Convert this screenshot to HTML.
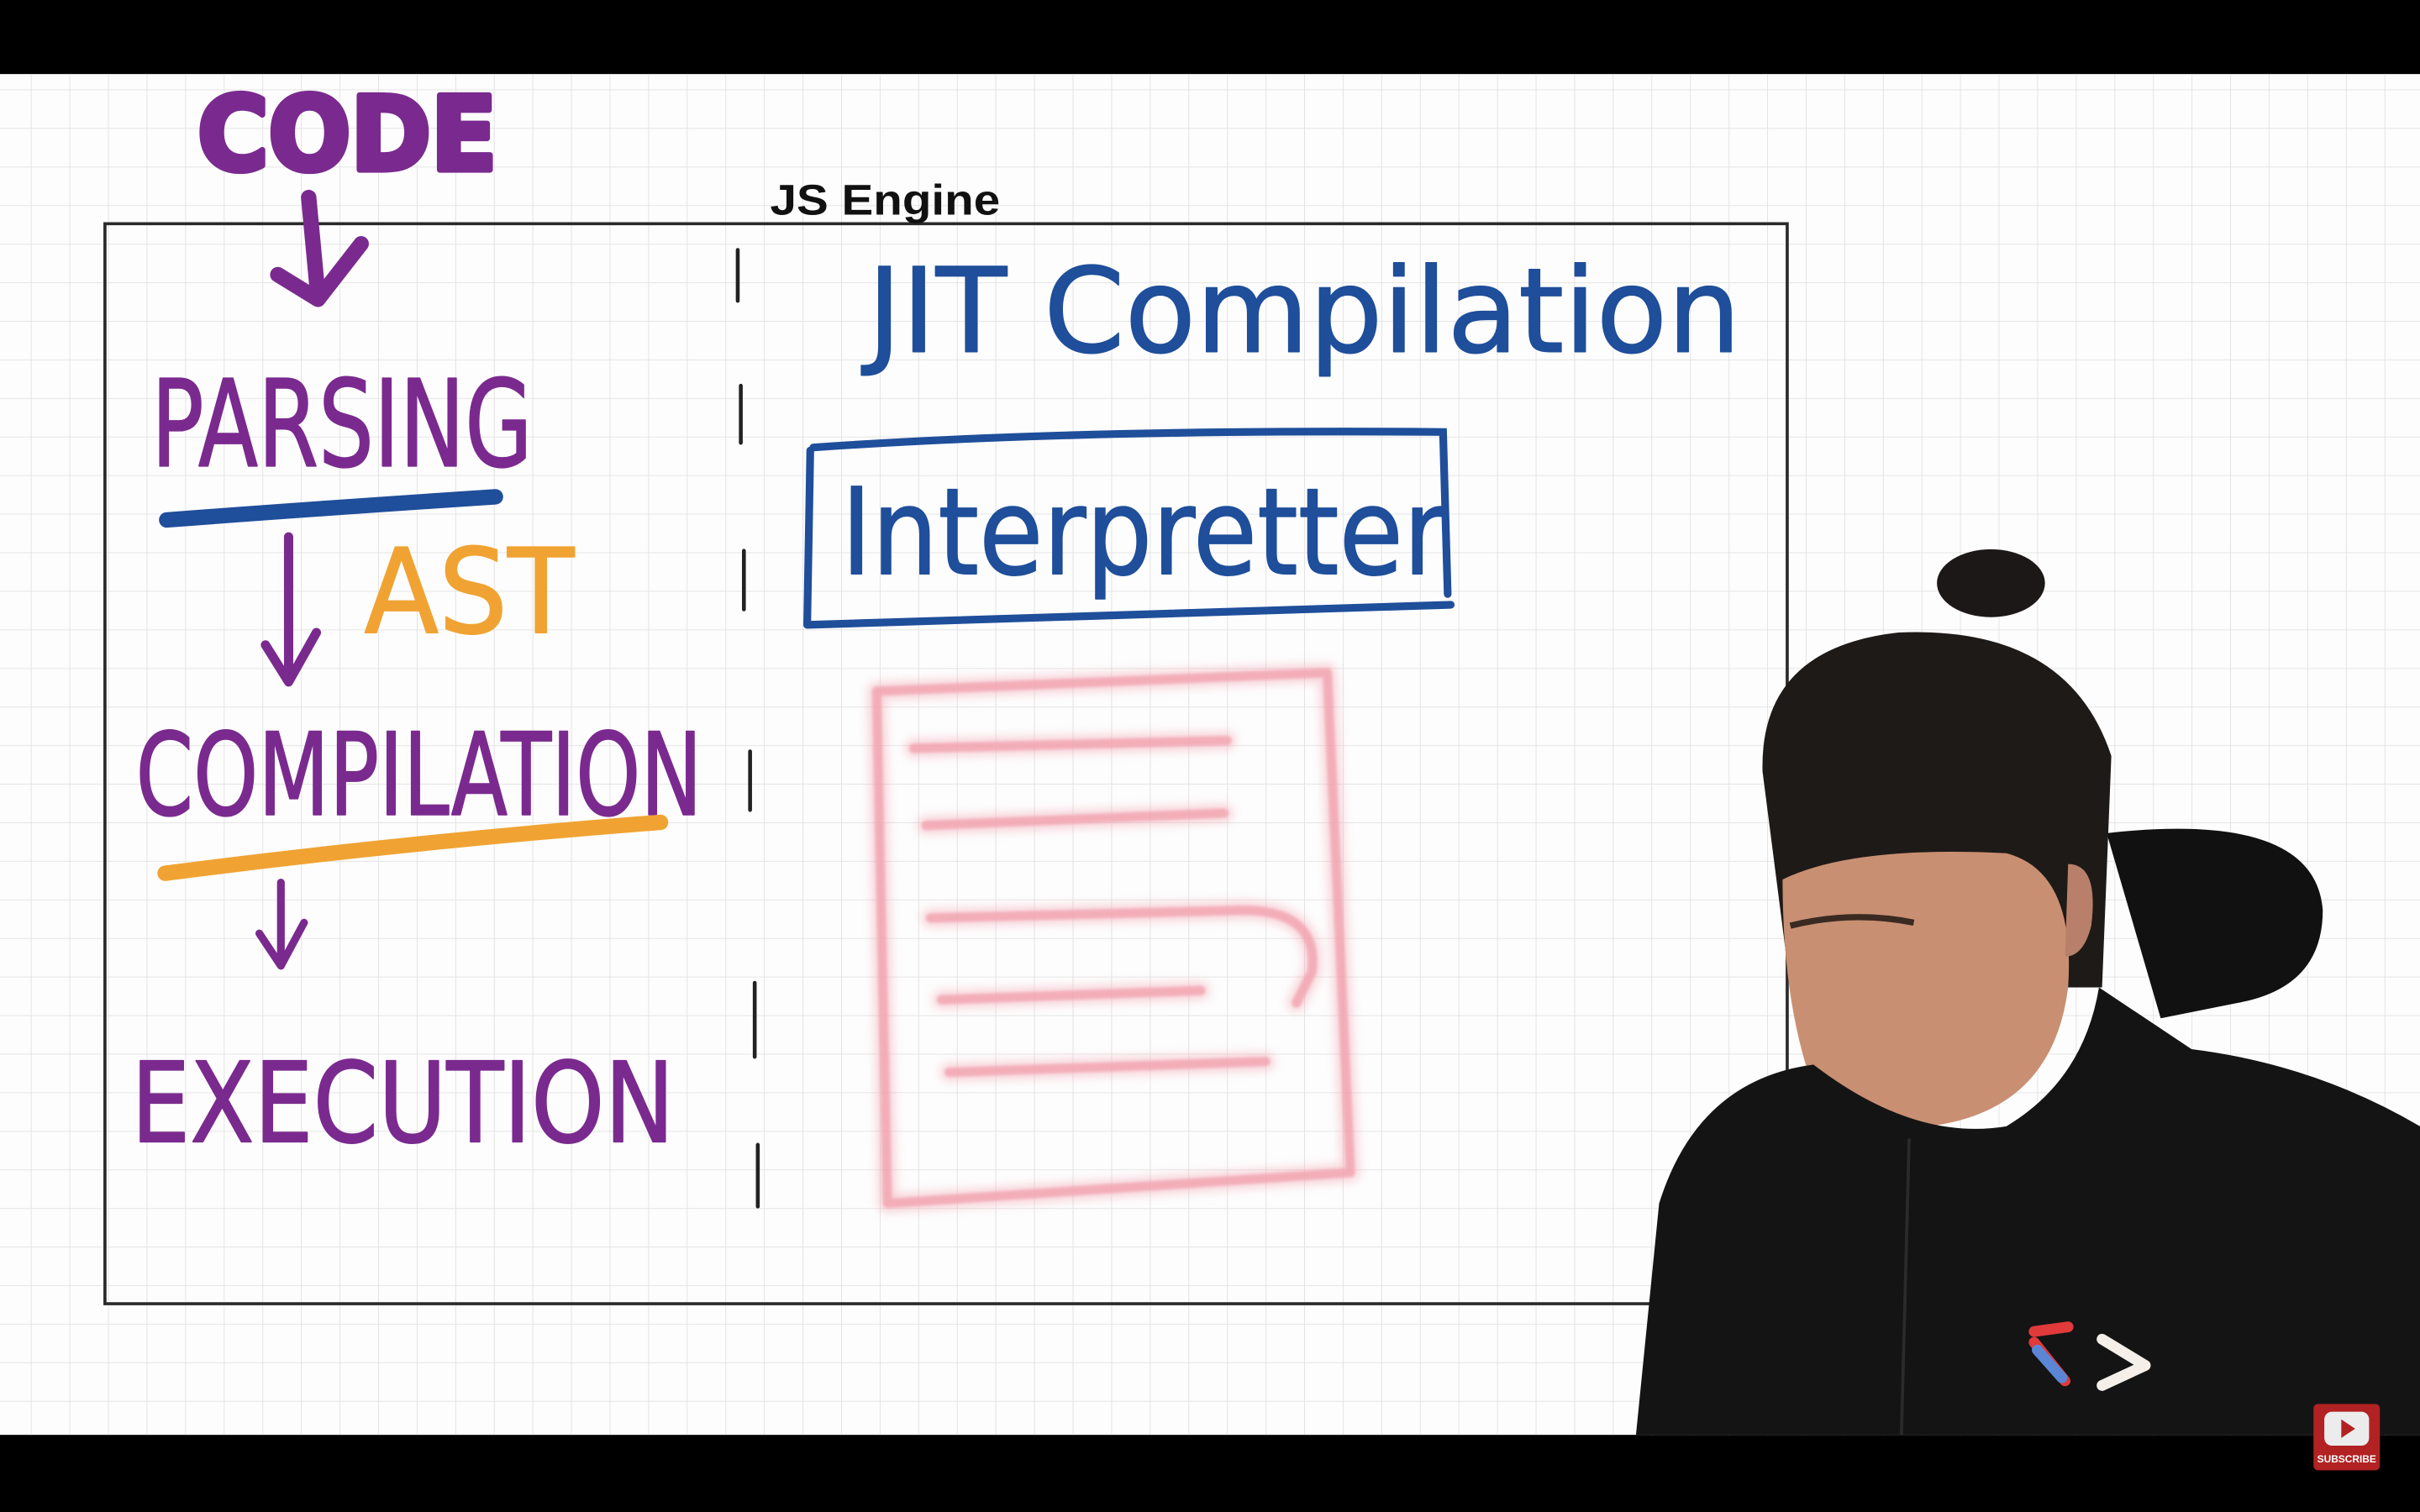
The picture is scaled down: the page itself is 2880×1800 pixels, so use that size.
<!DOCTYPE html>
<html><head><meta charset="utf-8"><style>
html,body{margin:0;padding:0;background:#000;width:2880px;height:1800px;overflow:hidden}
svg{display:block}
.hw{font-family:"DejaVu Sans","Liberation Sans",sans-serif;stroke-linejoin:round}
</style></head><body>
<svg width="2880" height="1800" viewBox="0 0 1568 980" xmlns="http://www.w3.org/2000/svg">
<defs>
<pattern id="g" x="20" y="8" width="25" height="25" patternUnits="userSpaceOnUse">
<path d="M0 0H25M0 0V25" stroke="#e2e2e2" stroke-width="1" fill="none"/>
</pattern>
<filter id="bl"><feGaussianBlur stdDeviation="3"/></filter>
<filter id="bl2"><feGaussianBlur stdDeviation="0.8"/></filter>
</defs>
<rect x="0" y="0" width="1568" height="980" fill="#000"/>
<rect x="0" y="48" width="1568" height="882" fill="#fdfdfd"/>
<rect x="0" y="48" width="1568" height="882" fill="url(#g)"/>

<path d="M68 145H1158V845H68Z" fill="none" stroke="#2a2a2a" stroke-width="2"/>
<text x="499" y="139" font-family="Liberation Sans,sans-serif" font-size="28" font-weight="bold" fill="#111" textLength="149" lengthAdjust="spacingAndGlyphs">JS Engine</text>

<g stroke="#222" stroke-width="2.5" stroke-linecap="round">
<path d="M478 162V195M480 250V287M482 357V395M486 487V525M489 637V685M491 742V782"/>
</g>

<g fill="#7a2a8e" stroke="#7a2a8e" class="hw">
<text x="128" y="110" font-size="66" stroke-width="4" font-weight="bold" textLength="194" lengthAdjust="spacingAndGlyphs">CODE</text>
<text x="98" y="302" font-size="78" stroke-width="1" textLength="247" lengthAdjust="spacingAndGlyphs">PARSING</text>
<text x="88" y="528" font-size="74" stroke-width="1" textLength="367" lengthAdjust="spacingAndGlyphs">COMPILATION</text>
<text x="85" y="740" font-size="72" stroke-width="1" textLength="352" lengthAdjust="spacingAndGlyphs">EXECUTION</text>
</g>
<g stroke="#7a2a8e" fill="none" stroke-linecap="round" stroke-linejoin="round">
<path d="M200 128L206 192M180 178L206 194L234 158" stroke-width="10"/>
<path d="M187 348L187 440M172 418L187 442L205 410" stroke-width="6"/>
<path d="M182 572L182 625M168 605L182 626L197 598" stroke-width="5"/>
</g>
<path d="M108 337Q200 330 321 322" stroke="#1f4e9a" stroke-width="10" fill="none" stroke-linecap="round"/>
<text x="236" y="410" class="hw" font-size="76" fill="#f0a332" stroke="#f0a332" stroke-width="1" textLength="136" lengthAdjust="spacingAndGlyphs">AST</text>
<path d="M107 566Q270 545 428 533" stroke="#f0a332" stroke-width="10" fill="none" stroke-linecap="round"/>

<g fill="#1f4e9a" stroke="#1f4e9a" stroke-width="0.8" class="hw">
<text x="562" y="228" font-size="76" textLength="566" lengthAdjust="spacingAndGlyphs">JIT Compilation</text>
<text x="545" y="372" font-size="78" textLength="392" lengthAdjust="spacingAndGlyphs">Interpretter</text>
</g>
<path d="M527 290Q700 278 935 280L938 385M523 405L940 392M525 292L523 405" stroke="#1f4e9a" stroke-width="5" fill="none" stroke-linecap="round"/>

<g stroke="#f2a4b0" fill="none" stroke-linecap="round" stroke-linejoin="round">
<g filter="url(#bl)" stroke-width="12" opacity="0.45">
<path d="M568 448L860 436L875 760L575 780L568 448Z"/>
<path d="M592 485L795 480M600 535L793 527M603 595L805 590Q855 590 850 630L840 650M610 648L778 642M615 695L820 688"/>
</g>
<g filter="url(#bl2)" stroke-width="6" opacity="0.8">
<path d="M568 448L860 436L875 760L575 780L568 448Z"/>
<path d="M592 485L795 480M600 535L793 527M603 595L805 590Q855 590 850 630L840 650M610 648L778 642M615 695L820 688"/>
</g>
</g>

<path d="M1365 540Q1500 525 1505 590Q1505 640 1450 650L1400 660Z" fill="#111"/>
<ellipse cx="1290" cy="378" rx="35" ry="22" fill="#1c1817"/>
<path d="M1142 500Q1140 420 1230 410Q1340 405 1368 490L1362 640L1160 640Z" fill="#1e1a18"/>
<path d="M1155 570Q1200 548 1300 553Q1345 565 1340 640Q1330 720 1250 730Q1200 730 1170 690Q1155 640 1155 570Z" fill="#c98f72"/>
<path d="M1160 600Q1200 590 1240 598" stroke="#3a2a22" stroke-width="4" fill="none"/>
<path d="M1340 560Q1360 560 1355 600Q1350 620 1338 620Z" fill="#b8806a"/>
<path d="M1060 930L1075 780Q1100 700 1175 690Q1240 740 1300 730Q1350 700 1360 640L1420 680Q1500 690 1568 730V930Z" fill="#141414"/>
<path d="M1237 738L1232 930" stroke="#2b2b2b" stroke-width="2"/>
<path d="M1318 863L1340 860M1318 870L1338 895" stroke="#e03a3a" stroke-width="7" stroke-linecap="round"/>
<path d="M1320 875L1336 893" stroke="#5b86d6" stroke-width="7" stroke-linecap="round"/>
<path d="M1362 868L1390 885L1362 898" stroke="#f4efe8" stroke-width="7" fill="none" stroke-linecap="round" stroke-linejoin="round"/>
<rect x="1499" y="910" width="43" height="43" rx="3" fill="#b22222"/>
<rect x="1506" y="915" width="29" height="22" rx="5" fill="#ececec"/>
<path d="M1517 920L1526 926L1517 932Z" fill="#b22222"/>
<text x="1520.5" y="948" font-family="Liberation Sans,sans-serif" font-size="6.5" font-weight="bold" fill="#fff" text-anchor="middle">SUBSCRIBE</text>
</svg>
</body></html>
